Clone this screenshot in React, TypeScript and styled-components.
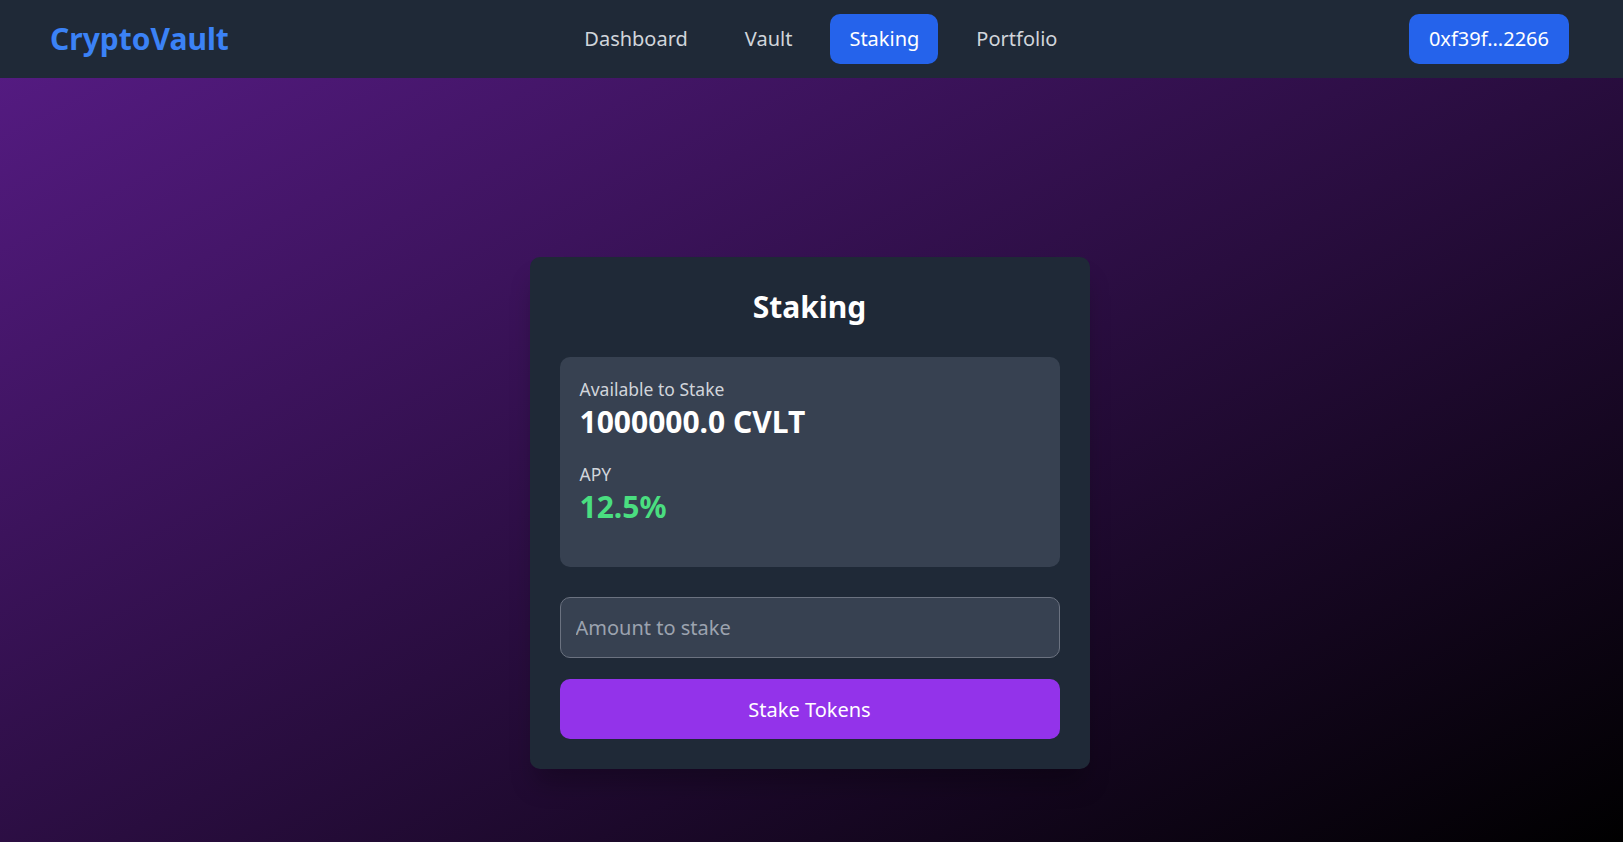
import React from "react";
import styled, { createGlobalStyle } from "styled-components";

const GlobalStyle = createGlobalStyle`
  * { box-sizing: border-box; }
  html, body { margin: 0; padding: 0; }
  body {
    font-family: "Noto Sans", "Open Sans", sans-serif;
  }
`;

const Page = styled.div`
  min-height: 100vh;
  background: linear-gradient(to bottom right, #581c87, #000000);
  display: flex;
  flex-direction: column;
`;

const Header = styled.header`
  height: 78px;
  background: #1f2937;
  display: flex;
  align-items: center;
  justify-content: space-between;
  padding: 0 54px 0 50px;
`;

const Logo = styled.div`
  font-size: 30px;
  font-weight: 700;
  color: #3b82f6;
  line-height: 1;
`;

const Nav = styled.nav`
  display: flex;
  align-items: center;
  gap: 19px;
  margin-left: 4px;
`;

const NavItem = styled.button<{ $active?: boolean }>`
  font-family: inherit;
  font-size: 20px;
  line-height: 30px;
  height: 50px;
  padding: 0 19px;
  border: none;
  border-radius: 10px;
  cursor: pointer;
  background: ${(p) => (p.$active ? "#2563eb" : "transparent")};
  color: ${(p) => (p.$active ? "#ffffff" : "#d1d5db")};
`;

const WalletButton = styled.button`
  font-family: inherit;
  font-size: 20px;
  line-height: 30px;
  height: 50px;
  padding: 0 20px;
  border: none;
  border-radius: 10px;
  background: #2563eb;
  color: #ffffff;
`;

const Main = styled.main`
  flex: 1;
  display: flex;
  justify-content: center;
  padding: 179px 4px 0 0;
`;

const Card = styled.section`
  width: 560px;
  height: 512px;
  background: #1f2937;
  border-radius: 10px;
  padding: 30px;
  display: flex;
  flex-direction: column;
  box-shadow: 0 20px 25px -5px rgba(0, 0, 0, 0.25);
`;

const Title = styled.h2`
  margin: 0 0 30px;
  font-size: 30px;
  line-height: 40px;
  font-weight: 700;
  color: #ffffff;
  text-align: center;
`;

const InfoBox = styled.div`
  background: #374151;
  border-radius: 10px;
  padding: 20px;
  height: 210px;
  display: flex;
  flex-direction: column;
`;

const Stat = styled.div`
  margin-bottom: 20px;
`;

const Label = styled.div`
  font-size: 17.5px;
  line-height: 25px;
  color: #d1d5db;
`;

const Value = styled.div<{ $green?: boolean }>`
  font-size: 30px;
  line-height: 40px;
  font-weight: 700;
  color: ${(p) => (p.$green ? "#4ade80" : "#ffffff")};
`;

const AmountInput = styled.input`
  margin-top: 30px;
  height: 61px;
  width: 100%;
  background: #374151;
  border: 1px solid #6b7280;
  border-radius: 10px;
  padding: 0 15px;
  font-family: inherit;
  font-size: 20px;
  color: #ffffff;
  outline: none;
  &::placeholder {
    color: #9ca3af;
  }
`;

const StakeButton = styled.button`
  margin-top: 21px;
  height: 60px;
  width: 100%;
  border: none;
  border-radius: 10px;
  background: #9333ea;
  color: #ffffff;
  font-family: inherit;
  font-size: 20px;
  cursor: pointer;
`;

export default function App() {
  return (
    <>
      <GlobalStyle />
      <Page>
        <Header>
          <Logo>CryptoVault</Logo>
          <Nav>
            <NavItem>Dashboard</NavItem>
            <NavItem>Vault</NavItem>
            <NavItem $active>Staking</NavItem>
            <NavItem>Portfolio</NavItem>
          </Nav>
          <WalletButton>0xf39f...2266</WalletButton>
        </Header>
        <Main>
          <Card>
            <Title>Staking</Title>
            <InfoBox>
              <Stat>
                <Label>Available to Stake</Label>
                <Value>1000000.0 CVLT</Value>
              </Stat>
              <Stat>
                <Label>APY</Label>
                <Value $green>12.5%</Value>
              </Stat>
            </InfoBox>
            <AmountInput placeholder="Amount to stake" />
            <StakeButton>Stake Tokens</StakeButton>
          </Card>
        </Main>
      </Page>
    </>
  );
}
